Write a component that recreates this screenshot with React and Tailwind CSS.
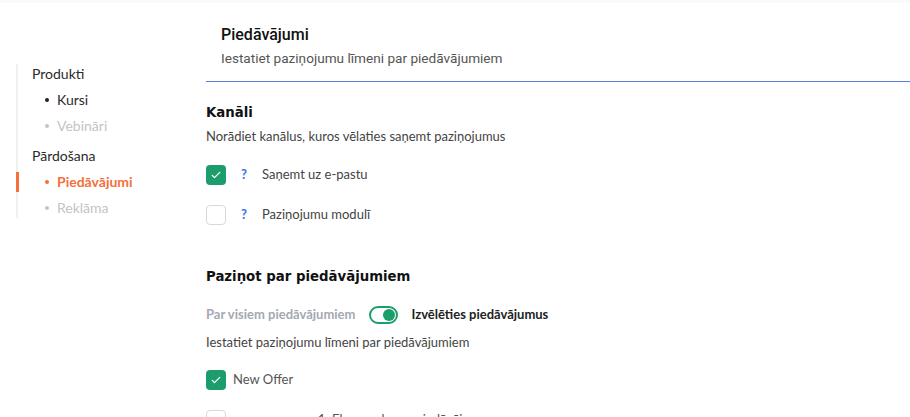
import React, { useState } from 'react';

function Check({ checked }) {
  return checked ? (
    <span className="w-5 h-5 rounded-[4px] bg-[#1b9e6b] flex items-center justify-center shrink-0">
      <svg viewBox="0 0 16 16" className="w-3 h-3" fill="none" stroke="white" strokeWidth="1.8" strokeLinecap="round" strokeLinejoin="round">
        <path d="M3 8.5l3 3 7-7" />
      </svg>
    </span>
  ) : (
    <span className="w-5 h-5 rounded-[4px] border border-[#d9d9d9] bg-white shrink-0" />
  );
}

function NavItem({ label, active, muted, sub }) {
  return (
    <div className={`relative h-5 leading-5 flex items-center ${sub ? 'pl-[27px]' : 'pl-[14px]'}`}>
      {active && <span className="absolute -left-[2px] top-0 h-5 w-[3px] bg-[#f5703a]" />}
      {sub && (
        <span className={`w-[4px] h-[4px] rounded-full mr-[8px] ${active ? 'bg-[#f5703a]' : muted ? 'bg-[#c4c4c4]' : 'bg-[#222]'}`} />
      )}
      <span className={`text-[14px] ${active ? 'text-[#f5703a] font-bold' : muted ? 'text-[#c4c4c4]' : 'text-[#2b2b2b]'}`}>{label}</span>
    </div>
  );
}

const headingFont = { fontFamily: '"DejaVu Sans", "Noto Sans", sans-serif' };

export default function App() {
  const [pick, setPick] = useState(true);

  return (
    <div className="w-[910px] h-[417px] overflow-hidden bg-white" style={{ fontFamily: 'Lato, "Noto Sans", sans-serif' }}>
      <div className="h-[3px] bg-[#fafafa]" />
      <div className="flex">
        {/* Sidebar */}
        <div className="w-[206px] shrink-0 pl-[16px] pt-[61px]">
          <div className="border-l-2 border-[#f0f0f0] flex flex-col gap-[6px]">
            <NavItem label="Produkti" />
            <NavItem label="Kursi" sub />
            <NavItem label="Vebināri" sub muted />
            <div className="h-[4px] -mt-[6px]" />
            <NavItem label="Pārdošana" />
            <NavItem label="Piedāvājumi" sub active />
            <NavItem label="Reklāma" sub muted />
          </div>
        </div>

        {/* Main */}
        <div className="flex-1">
          <div className="pl-[15px] pt-[22px] pb-[13px] border-b border-[#5b7fdf]" style={{ fontFamily: 'Roboto, sans-serif' }}>
            <div className="text-[16px] font-medium text-[#111] leading-5">Piedāvājumi</div>
            <div className="text-[13.6px] text-[#555] leading-5 mt-[3px]">Iestatiet paziņojumu līmeni par piedāvājumiem</div>
          </div>

          <div className="pt-[19px]">
            <h2 className="text-[13.3px] font-bold text-[#111] leading-6" style={headingFont}>Kanāli</h2>
            <p className="text-[13px] text-[#444] leading-5 mt-[1px]">Norādiet kanālus, kuros vēlaties saņemt paziņojumus</p>

            <div className="mt-[19px] flex flex-col gap-[20px]">
              <div className="flex items-center h-5">
                <Check checked />
                <span className="ml-[15px] text-[13px] font-bold text-[#3b6fe0]">?</span>
                <span className="ml-[15px] text-[13px] text-[#444]">Saņemt uz e-pastu</span>
              </div>
              <div className="flex items-center h-5">
                <Check />
                <span className="ml-[15px] text-[13px] font-bold text-[#3b6fe0]">?</span>
                <span className="ml-[15px] text-[13px] text-[#444]">Paziņojumu modulī</span>
              </div>
            </div>

            <h2 className="mt-[40px] text-[13.3px] font-bold text-[#111] leading-6" style={headingFont}>Paziņot par piedāvājumiem</h2>

            <div className="mt-[16px] flex items-center h-5 text-[13px] font-bold">
              <span className="text-[#a3a9b3]">Par visiem piedāvājumiem</span>
              <button
                onClick={() => setPick(!pick)}
                className={`ml-[14px] w-[29px] h-[18px] rounded-full border-2 border-[#1b9e6b] bg-white flex items-center px-[1px] ${pick ? 'justify-end' : 'justify-start'}`}
              >
                <span className="w-[12px] h-[12px] rounded-full bg-[#1b9e6b]" />
              </button>
              <span className="ml-[13px] text-[#222]">Izvēlēties piedāvājumus</span>
            </div>

            <p className="mt-[7px] text-[13px] text-[#444] leading-5">Iestatiet paziņojumu līmeni par piedāvājumiem</p>

            <div className="mt-[18px] flex flex-col gap-[20px]">
              <div className="flex items-center h-5">
                <Check checked />
                <span className="ml-[7px] text-[13px] text-[#555]">New Offer</span>
              </div>
              <div className="flex items-center h-5">
                <Check />
                <span className="ml-[92px] text-[13px] text-[#555]">1. Ekspresskursa piedāvājums</span>
              </div>
            </div>
          </div>
        </div>
      </div>
    </div>
  );
}
